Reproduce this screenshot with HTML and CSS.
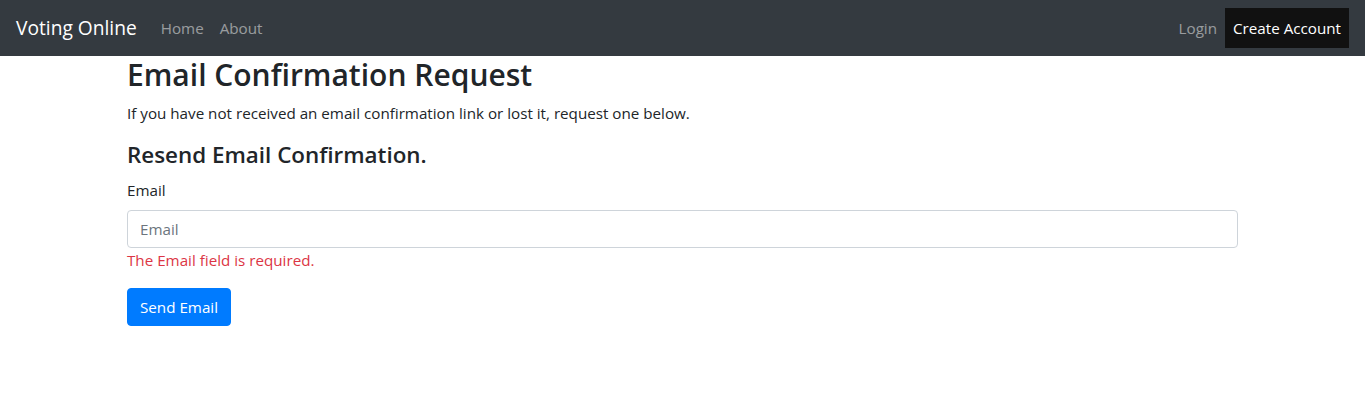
FILE: index.html
```html
<!DOCTYPE html>
<html lang="en">
<head>
<meta charset="utf-8">
<title>Resend email confirmation - Voting Online</title>
<link rel="stylesheet" href="styles.css">
</head>
<body>
<header>
  <nav class="navbar">
    <a class="brand" href="#">Voting Online</a>
    <ul class="nav nav-main">
      <li><a class="nav-link" href="#">Home</a></li>
      <li><a class="nav-link" href="#">About</a></li>
    </ul>
    <ul class="nav nav-right">
      <li><a class="nav-link" href="#">Login</a></li>
      <li><a class="nav-link nav-link-dark" href="#">Create Account</a></li>
    </ul>
  </nav>
</header>
<main class="container">
  <h1 class="title">Email Confirmation Request</h1>
  <p class="lead-text">If you have not received an email confirmation link or lost it, request one below.</p>
  <h4 class="subtitle">Resend Email Confirmation.</h4>
  <form class="form">
    <div class="form-group">
      <label class="label" for="email">Email</label>
      <input class="form-control" id="email" type="email" placeholder="Email">
      <span class="text-danger">The Email field is required.</span>
    </div>
    <button type="button" class="btn btn-primary">Send Email</button>
  </form>
</main>
</body>
</html>
```

FILE: styles.css
```css
* { box-sizing: border-box; }

html { font-size: 16px; }

body {
  margin: 0;
  font-family: "Segoe UI", "Open Sans", "Noto Sans", sans-serif;
  font-size: 15.2px;
  line-height: 24px;
  color: #212529;
  background: #fff;
}

a { text-decoration: none; }

.navbar {
  display: flex;
  align-items: center;
  height: 56px;
  padding: 8px 16px;
  background: #343a40;
}

.brand {
  font-size: 19.2px;
  line-height: 30px;
  padding: 5px 0;
  margin-right: 16px;
  color: #fff;
}

.nav {
  display: flex;
  list-style: none;
  margin: 0;
  padding: 0;
}

.nav-right { margin-left: auto; }

.nav-link {
  display: block;
  padding: 8px;
  line-height: 24px;
  color: rgba(255, 255, 255, 0.5);
}

.nav-link-dark {
  background: #111;
  color: #fff;
}

.container {
  max-width: 1140px;
  margin: 0 auto;
  padding: 0 15px 0 14.5px;
}

.title {
  margin: 0 0 8px;
  font-size: 30px;
  font-weight: 600;
  line-height: 37.4px;
}

.lead-text {
  margin: 0 0 16px;
}

.subtitle {
  margin: 0 0 8px;
  font-size: 22.4px;
  font-weight: 600;
  line-height: 28.8px;
}

.form-group { margin-bottom: 16px; }

.label {
  display: inline-block;
  margin-bottom: 8px;
}

.form-control {
  display: block;
  width: 100%;
  height: 38px;
  padding: 6px 12px;
  font: inherit;
  line-height: 24px;
  color: #495057;
  border: 1px solid #ced4da;
  border-radius: 4px;
  background: #fff;
}

.form-control::placeholder { color: #6c757d; }

.text-danger {
  display: block;
  color: #dc3545;
}

.btn {
  display: inline-block;
  padding: 6px 12px;
  font: inherit;
  line-height: 24px;
  border: 1px solid transparent;
  border-radius: 4px;
  cursor: pointer;
}

.btn-primary {
  color: #fff;
  background: #007bff;
  border-color: #007bff;
}
```
